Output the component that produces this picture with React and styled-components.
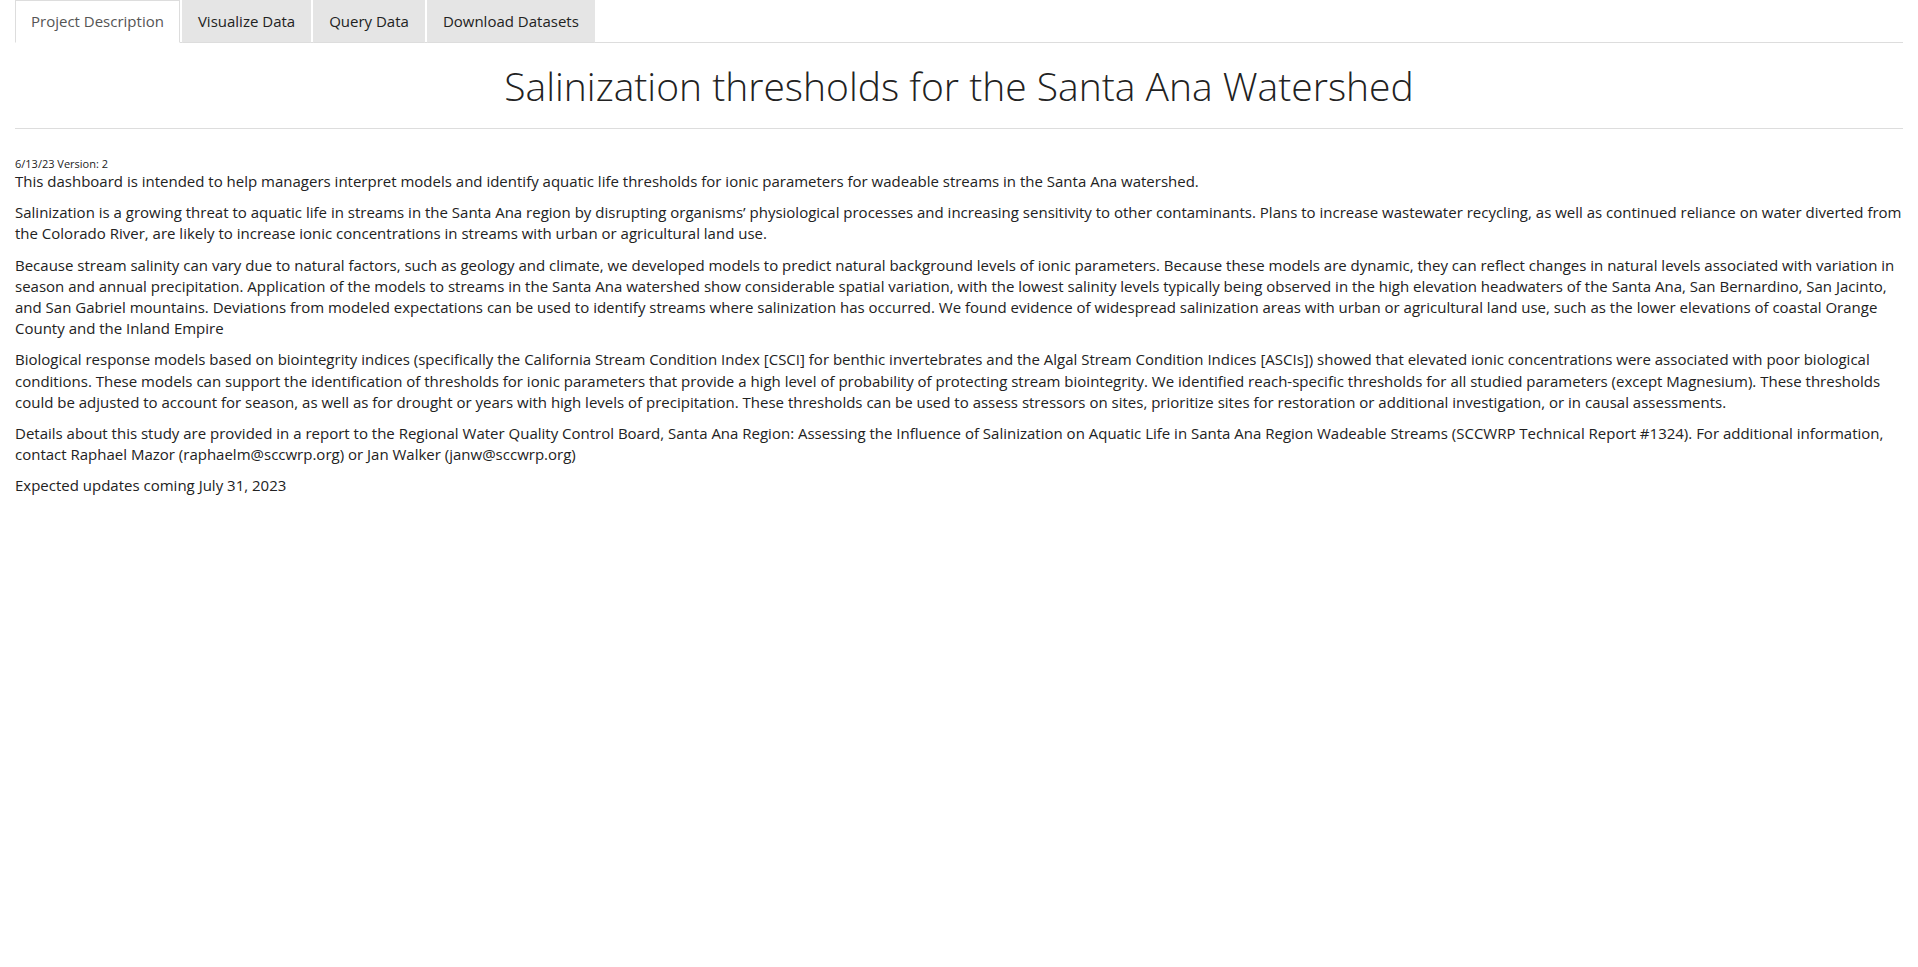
import React, { useState } from 'react';
import styled, { createGlobalStyle } from 'styled-components';

const GlobalStyle = createGlobalStyle`
  html, body {
    margin: 0;
    padding: 0;
    background: #fff;
  }
  body {
    font-family: "Open Sans", "Liberation Sans", sans-serif;
    font-size: 15px;
    line-height: 21.2px;
    color: #222;
  }
`;

const tabs = ['Project Description', 'Visualize Data', 'Query Data', 'Download Datasets'];

const paragraphs = [
  'Salinization is a growing threat to aquatic life in streams in the Santa Ana region by disrupting organisms\u2019 physiological processes and increasing sensitivity to other contaminants. Plans to increase wastewater recycling, as well as continued reliance on water diverted from the Colorado River, are likely to increase ionic concentrations in streams with urban or agricultural land use.',
  'Because stream salinity can vary due to natural factors, such as geology and climate, we developed models to predict natural background levels of ionic parameters. Because these models are dynamic, they can reflect changes in natural levels associated with variation in season and annual precipitation. Application of the models to streams in the Santa Ana watershed show considerable spatial variation, with the lowest salinity levels typically being observed in the high elevation headwaters of the Santa Ana, San Bernardino, San Jacinto, and San Gabriel mountains. Deviations from modeled expectations can be used to identify streams where salinization has occurred. We found evidence of widespread salinization areas with urban or agricultural land use, such as the lower elevations of coastal Orange County and the Inland Empire',
  'Biological response models based on biointegrity indices (specifically the California Stream Condition Index [CSCI] for benthic invertebrates and the Algal Stream Condition Indices [ASCIs]) showed that elevated ionic concentrations were associated with poor biological conditions. These models can support the identification of thresholds for ionic parameters that provide a high level of probability of protecting stream biointegrity. We identified reach-specific thresholds for all studied parameters (except Magnesium). These thresholds could be adjusted to account for season, as well as for drought or years with high levels of precipitation. These thresholds can be used to assess stressors on sites, prioritize sites for restoration or additional investigation, or in causal assessments.',
  'Details about this study are provided in a report to the Regional Water Quality Control Board, Santa Ana Region: Assessing the Influence of Salinization on Aquatic Life in Santa Ana Region Wadeable Streams (SCCWRP Technical Report #1324). For additional information, contact Raphael Mazor (raphaelm@sccwrp.org) or Jan Walker (janw@sccwrp.org)',
  'Expected updates coming July 31, 2023',
];

export default function App() {
  const [active, setActive] = useState(0);
  return (
    <Page>
      <GlobalStyle />
      <TabBar>
        {tabs.map((t, i) => (
          <Tab key={t} active={i === active} onClick={() => setActive(i)}>
            {t}
          </Tab>
        ))}
      </TabBar>
      <Title>Salinization thresholds for the Santa Ana Watershed</Title>
      <Rule />
      <Version>6/13/23 Version: 2</Version>
      <Lead>This dashboard is intended to help managers interpret models and identify aquatic life thresholds for ionic parameters for wadeable streams in the Santa Ana watershed.</Lead>
      {paragraphs.map((p, i) => (
        <Para key={i}>{p}</Para>
      ))}
    </Page>
  );
}

const Page = styled.div`
  padding: 0 15px;
`;

const TabBar = styled.div`
  display: flex;
  border-bottom: 1px solid #ddd;
`;

const Tab = styled.div`
  padding: 10px 15px;
  margin-right: 2px;
  margin-bottom: -1px;
  line-height: 21px;
  font-size: 15px;
  cursor: pointer;
  border: 1px solid ${p => (p.active ? '#ddd' : '#e5e5e5')};
  border-bottom-color: ${p => (p.active ? '#fff' : '#ddd')};
  background: ${p => (p.active ? '#fff' : '#e5e5e5')};
  color: ${p => (p.active ? '#555' : '#222')};
`;

const Title = styled.h2`
  margin: 21px 0 0;
  text-align: center;
  font-size: 39px;
  font-weight: 300;
  line-height: 43px;
  color: #222;
`;

const Rule = styled.hr`
  margin: 21px 0 0;
  border: 0;
  border-top: 1px solid #ddd;
`;

const Version = styled.div`
  margin-top: 28px;
  font-size: 11px;
  line-height: 14px;
`;

const Lead = styled.p`
  margin: 0 0 10px;
`;

const Para = styled.p`
  margin: 0 0 10px;
`;
